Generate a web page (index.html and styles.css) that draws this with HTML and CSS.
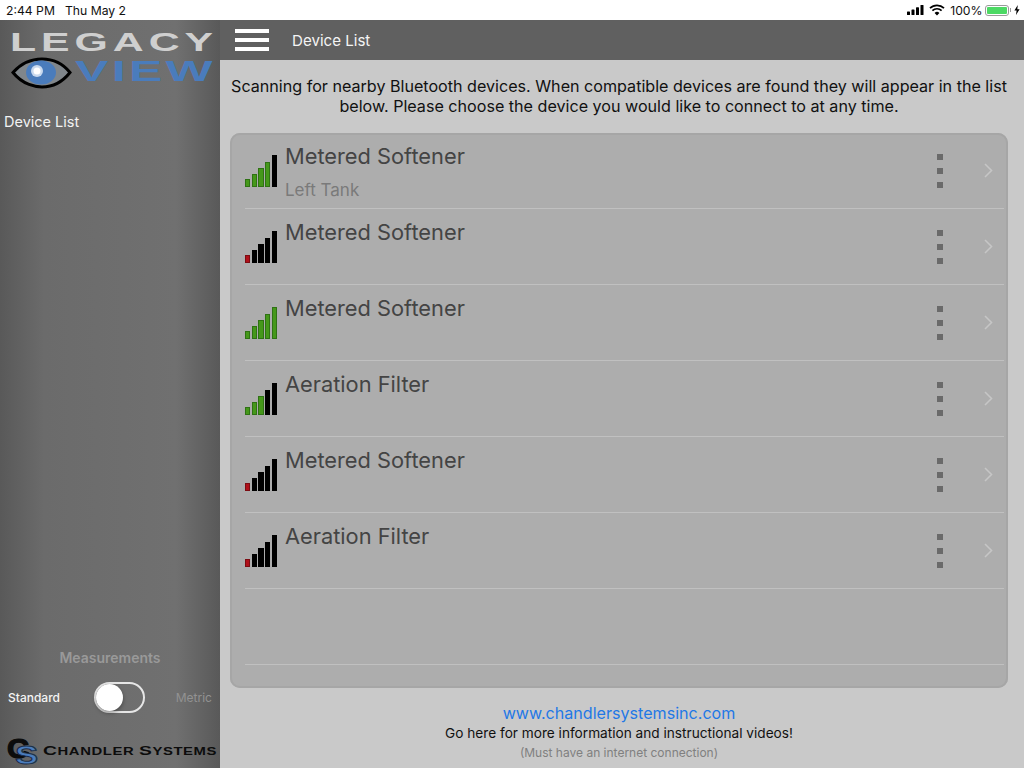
FILE: index.html
```html
<!DOCTYPE html>
<html lang="en">
  <head>
    <meta charset="UTF-8" />
    <title>Device List</title>
    <link rel="stylesheet" href="styles.css">
  </head>
  <body>
    <div class="status">
      <div class="status-left"><span>2:44 PM</span><span>Thu May 2</span></div>
      <div class="status-right">
        <svg class="cell" width="18" height="10" viewBox="0 0 18 10"><rect x="0" y="6.5" width="3" height="3.5" rx=".6"/><rect x="4.5" y="4.5" width="3" height="5.5" rx=".6"/><rect x="9" y="2.3" width="3" height="7.7" rx=".6"/><rect x="13.5" y="0" width="3" height="10" rx=".6"/></svg>
        <svg width="16" height="12" viewBox="0 0 16 12"><path d="M1 4.2a10 10 0 0 1 14 0" fill="none" stroke="#000" stroke-width="1.7"/><path d="M3.4 6.6a6.6 6.6 0 0 1 9.2 0" fill="none" stroke="#000" stroke-width="1.7"/><path d="M5.6 8.9l2.4 2.6 2.4-2.6a3.4 3.4 0 0 0-4.8 0z"/></svg>
        <span>100%</span>
        <div class="battery"><div class="battery-fill"></div></div>
        <div class="battery-cap"></div>
        <svg class="bolt" width="6" height="10" viewBox="0 0 6 10"><path d="M3.8 0L0.4 5.6h2.2L2 10l3.6-5.8H3.3z"/></svg>
      </div>
    </div>
    <div class="app">
      <div class="sidebar">
        <svg class="logo" width="220" height="72" viewBox="0 0 220 72">
          <text x="10" y="31" class="logo-legacy" textLength="208" lengthAdjust="spacingAndGlyphs">LEGACY</text>
          <text x="75" y="61" class="logo-view" textLength="141" lengthAdjust="spacingAndGlyphs">VIEW</text>
          <path d="M13 52.500C24 40 36 39 42 39s18 1 28 13.500C60 65 48 67 42 67s-19-2-29-14.500z" fill="#80868b" stroke="#000" stroke-width="3"/>
          <ellipse cx="41" cy="52.500" rx="15" ry="12" fill="#4a7cbc"/>
          <circle cx="37" cy="51" r="6" fill="#c9d9ee"/>
          <circle cx="37" cy="51" r="3.500" fill="#fff"/>
        </svg>
        <div class="nav-item">Device List</div>
        <div class="measure">
          <div class="measure-title">Measurements</div>
          <div class="measure-row">
            <span class="unit-on">Standard</span>
            <div class="toggle"><div class="knob"></div></div>
            <span class="unit-off">Metric</span>
          </div>
        </div>
        <svg class="company" width="220" height="36" viewBox="0 0 220 36">
          <text x="7" y="26" class="cs-c" textLength="22" lengthAdjust="spacingAndGlyphs">C</text>
          <text x="15" y="32" class="cs-s" textLength="23" lengthAdjust="spacingAndGlyphs">S</text>
          <text x="43" y="23" class="company-name" textLength="174" lengthAdjust="spacingAndGlyphs"><tspan class="cap">C</tspan>HANDLER <tspan class="cap">S</tspan>YSTEMS</text>
        </svg>
      </div>
      <div class="main">
        <div class="topbar">
          <div class="burger"><span></span><span></span><span></span></div>
          <div class="topbar-title">Device List</div>
        </div>
        <div class="content">
          <p class="intro">Scanning for nearby Bluetooth devices. When compatible devices are found they will appear in the list below. Please choose the device you would like to connect to at any time.</p>
          <div class="list">
            <div class="row">
              <div class="signal"><i class="g"></i><i class="g"></i><i class="g"></i><i class="g"></i><i></i></div>
              <div class="names"><div class="name">Metered Softener</div><div class="sub">Left Tank</div></div>
              <div class="dots"><i></i><i></i><i></i></div>
              <svg class="chevron" width="9" height="15" viewBox="0 0 9 15"><path d="M1 1l6.500 6.500L1 14" fill="none" stroke="#c6c6c6" stroke-width="1.600"/></svg>
            </div>
            <div class="row">
              <div class="signal"><i class="r"></i><i></i><i></i><i></i><i></i></div>
              <div class="names"><div class="name">Metered Softener</div></div>
              <div class="dots"><i></i><i></i><i></i></div>
              <svg class="chevron" width="9" height="15" viewBox="0 0 9 15"><path d="M1 1l6.500 6.500L1 14" fill="none" stroke="#c6c6c6" stroke-width="1.600"/></svg>
            </div>
            <div class="row">
              <div class="signal"><i class="g"></i><i class="g"></i><i class="g"></i><i class="g"></i><i class="g"></i></div>
              <div class="names"><div class="name">Metered Softener</div></div>
              <div class="dots"><i></i><i></i><i></i></div>
              <svg class="chevron" width="9" height="15" viewBox="0 0 9 15"><path d="M1 1l6.500 6.500L1 14" fill="none" stroke="#c6c6c6" stroke-width="1.600"/></svg>
            </div>
            <div class="row">
              <div class="signal"><i class="g"></i><i class="g"></i><i class="g"></i><i></i><i></i></div>
              <div class="names"><div class="name">Aeration Filter</div></div>
              <div class="dots"><i></i><i></i><i></i></div>
              <svg class="chevron" width="9" height="15" viewBox="0 0 9 15"><path d="M1 1l6.500 6.500L1 14" fill="none" stroke="#c6c6c6" stroke-width="1.600"/></svg>
            </div>
            <div class="row">
              <div class="signal"><i class="r"></i><i></i><i></i><i></i><i></i></div>
              <div class="names"><div class="name">Metered Softener</div></div>
              <div class="dots"><i></i><i></i><i></i></div>
              <svg class="chevron" width="9" height="15" viewBox="0 0 9 15"><path d="M1 1l6.500 6.500L1 14" fill="none" stroke="#c6c6c6" stroke-width="1.600"/></svg>
            </div>
            <div class="row">
              <div class="signal"><i class="r"></i><i></i><i></i><i></i><i></i></div>
              <div class="names"><div class="name">Aeration Filter</div></div>
              <div class="dots"><i></i><i></i><i></i></div>
              <svg class="chevron" width="9" height="15" viewBox="0 0 9 15"><path d="M1 1l6.500 6.500L1 14" fill="none" stroke="#c6c6c6" stroke-width="1.600"/></svg>
            </div>
            <div class="row"></div>
          </div>
          <div class="footer">
            <div class="link">www.chandlersystemsinc.com</div>
            <div class="footer-text">Go here for more information and instructional videos!</div>
            <div class="footer-note">(Must have an internet connection)</div>
          </div>
        </div>
      </div>
    </div>
  </body>
</html>
```

FILE: styles.css
```css
* {
  margin: 0;
  padding: 0;
  box-sizing: border-box;
  font-family: "Inter", "Liberation Sans", sans-serif;
}
html,
body {
  width: 1024px;
  height: 768px;
  overflow: hidden;
}
.status {
  height: 20px;
  background: #fff;
  color: #111;
  font-size: 12.200px;
  display: flex;
  align-items: center;
  justify-content: space-between;
  padding: 0 4px 0 6px;
}
.status-left {
  display: flex;
  gap: 10px;
}
.status-right {
  display: flex;
  align-items: center;
  gap: 5px;
}
.cell {
  margin-right: -1px;
}
.battery {
  width: 24px;
  height: 11px;
  border: 1px solid #9a9a9a;
  border-radius: 3px;
  padding: 1px;
  margin-left: -3px;
}
.battery-fill {
  height: 100%;
  background: #4cd964;
  border-radius: 1px;
}
.battery-cap {
  width: 1.500px;
  height: 4px;
  background: #9a9a9a;
  margin-left: -4px;
}
.bolt {
  margin-left: -2px;
}
.app {
  display: flex;
  height: 748px;
}
.sidebar {
  width: 220px;
  display: flex;
  flex-direction: column;
  background: linear-gradient(90deg, #595959 0%, #6b6b6b 20%, #707070 80%, #595959 100%);
}
.logo {
  display: block;
  flex-shrink: 0;
}
.logo-legacy {
  font-family: "Liberation Sans", sans-serif;
  font-weight: 700;
  font-size: 26px;
  letter-spacing: 3px;
  fill: #cfcfcf;
}
.logo-view {
  font-family: "Liberation Sans", sans-serif;
  font-weight: 700;
  font-size: 29px;
  letter-spacing: 2px;
  fill: #4a7cbc;
}
.nav-item {
  color: #f2f2f2;
  font-size: 14.500px;
  padding: 21px 0 0 4px;
}
.measure {
  margin-top: auto;
}
.measure-title {
  color: #999;
  font-size: 14px;
  font-weight: 600;
  text-align: center;
}
.measure-row {
  display: flex;
  align-items: center;
  justify-content: space-between;
  padding: 0 8px;
  margin-top: 16px;
  font-size: 12px;
}
.unit-on {
  color: #f4f4f4;
  font-weight: 500;
}
.unit-off {
  color: #929292;
}
.toggle {
  width: 51px;
  height: 31px;
  border: 2px solid #e6e6e6;
  border-radius: 16px;
  margin-left: 4px;
}
.knob {
  width: 27px;
  height: 27px;
  background: #fff;
  border-radius: 50%;
  box-shadow: 0 2px 4px rgba(0, 0, 0, 0.35);
}
.company {
  display: block;
  margin-top: 19px;
  flex-shrink: 0;
}
.cs-c {
  font-family: "Liberation Sans", sans-serif;
  font-weight: 700;
  font-size: 27px;
  fill: #0c0c0c;
  stroke: #0c0c0c;
  stroke-width: 1.200px;
}
.cs-s {
  font-family: "Liberation Sans", sans-serif;
  font-weight: 700;
  font-size: 25px;
  fill: #4a7cbc;
  stroke: #1d2f4a;
  stroke-width: 1px;
}
.company-name {
  font-family: "Liberation Sans", sans-serif;
  font-weight: 700;
  font-size: 10px;
  letter-spacing: 0.400px;
  fill: #0c0c0c;
}
.company-name .cap {
  font-family: "Liberation Sans", sans-serif;
  font-size: 13px;
}
.main {
  flex: 1;
  display: flex;
  flex-direction: column;
}
.topbar {
  height: 40px;
  background: #606060;
  display: flex;
  align-items: center;
  padding-left: 15px;
}
.burger {
  width: 34px;
  display: flex;
  flex-direction: column;
  gap: 5px;
}
.burger span {
  height: 4px;
  background: #fff;
}
.topbar-title {
  color: #f4f4f4;
  font-size: 15.100px;
  margin-left: 23px;
}
.content {
  flex: 1;
  background: #c9c9c9;
  padding: 16px 16px 0 10px;
  display: flex;
  flex-direction: column;
}
.intro {
  color: #111;
  font-size: 16.120px;
  line-height: 20px;
  margin: 0 -1px;
  text-align: center;
}
.list {
  height: 555px;
  margin-top: 17px;
  background: #adadad;
  border-radius: 10px;
  box-shadow: inset 0 0 0 2px #a6a6a6;
  padding: 0 4px 0 15px;
}
.row {
  height: 76px;
  display: flex;
  border-bottom: 1px solid #c0c0c0;
  padding-right: 11px;
}
.signal {
  width: 32px;
  height: 32px;
  margin-top: 22px;
  display: flex;
  align-items: flex-end;
  gap: 1.500px;
  flex-shrink: 0;
}
.signal i {
  width: 5.200px;
  background: #000;
}
.signal i:nth-child(1) { height: 8px; }
.signal i:nth-child(2) { height: 13px; }
.signal i:nth-child(3) { height: 19px; }
.signal i:nth-child(4) { height: 25px; }
.signal i:nth-child(5) { height: 32px; }
.signal i.g {
  background: #45981a;
  box-shadow: inset 0 0 0 1px #2f7214;
}
.signal i.r {
  background: #b0101a;
  box-shadow: inset 0 0 0 1px #7c0c12;
}
.names {
  flex: 1;
  padding-left: 8px;
}
.name {
  color: #444;
  font-size: 21.800px;
  line-height: 28px;
  margin-top: 9px;
}
.sub {
  color: #7a7a7a;
  font-size: 17px;
  line-height: 22px;
  margin-top: 9px;
}
.dots {
  display: flex;
  flex-direction: column;
  gap: 8px;
  margin: 21px 41px 0 0;
}
.dots i {
  width: 6px;
  height: 6px;
  background: #6a6a6a;
}
.chevron {
  margin-top: 30px;
  flex-shrink: 0;
}
.footer {
  text-align: center;
  margin-top: 15px;
}
.link {
  color: #1f78e6;
  font-size: 16.100px;
  line-height: 20px;
}
.footer-text {
  color: #111;
  font-size: 13.650px;
  line-height: 20px;
}
.footer-note {
  color: #808080;
  font-size: 12px;
  line-height: 20px;
}
```
